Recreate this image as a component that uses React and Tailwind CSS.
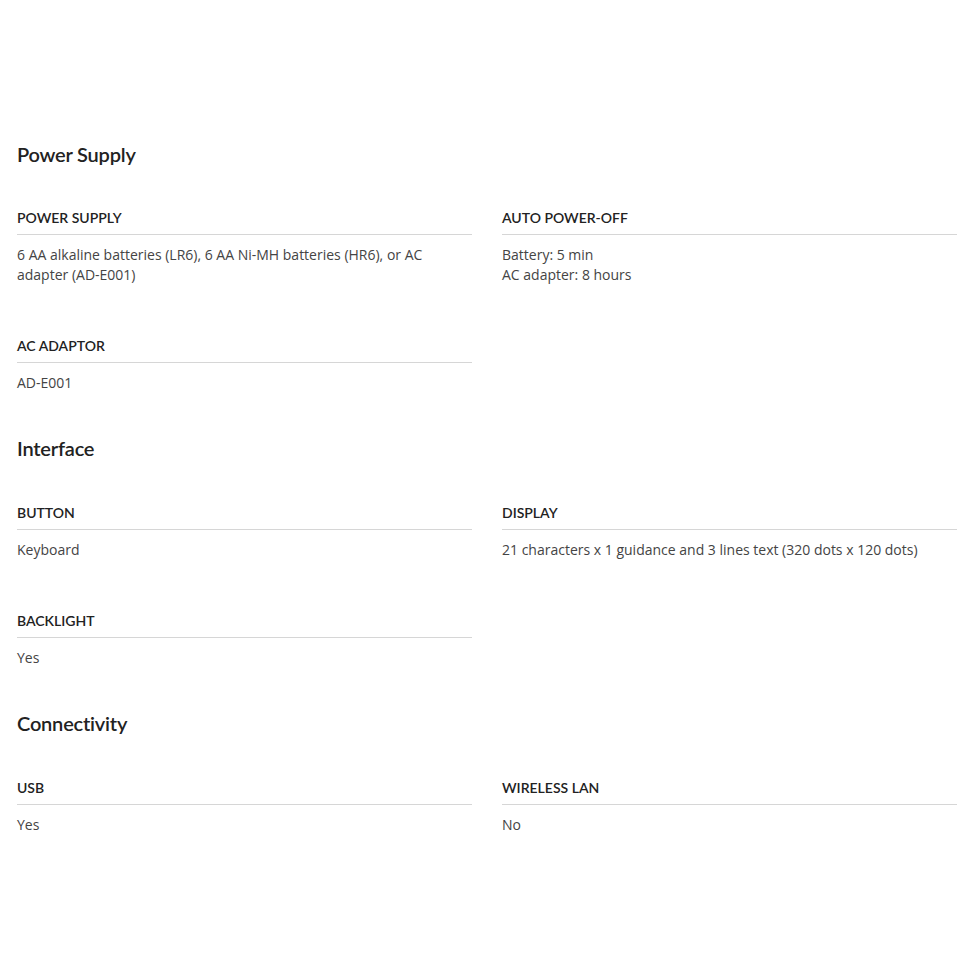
import React from 'react';

const SECTIONS = [
  {
    title: 'Power Supply',
    items: [
      { label: 'POWER SUPPLY', value: ['6 AA alkaline batteries (LR6), 6 AA Ni-MH batteries (HR6), or AC adapter (AD-E001)'] },
      { label: 'AUTO POWER-OFF', value: ['Battery: 5 min', 'AC adapter: 8 hours'] },
      { label: 'AC ADAPTOR', value: ['AD-E001'] },
    ],
  },
  {
    title: 'Interface',
    items: [
      { label: 'BUTTON', value: ['Keyboard'] },
      { label: 'DISPLAY', value: ['21 characters x 1 guidance and 3 lines text (320 dots x 120 dots)'] },
      { label: 'BACKLIGHT', value: ['Yes'] },
    ],
  },
  {
    title: 'Connectivity',
    items: [
      { label: 'USB', value: ['Yes'] },
      { label: 'WIRELESS LAN', value: ['No'] },
    ],
  },
];

const head = { fontFamily: 'Lato, "Open Sans", sans-serif' };
const body = { fontFamily: '"Open Sans", Arial, sans-serif' };

function Spec({ label, value }) {
  return (
    <div>
      <div className="text-[14px] leading-[20px] font-semibold text-[#222] pt-px pb-[6px] border-b border-[#d6d6d6]" style={head}>
        {label}
      </div>
      <div className="mt-[10px] text-[14px] leading-[20px] text-[#444]" style={body}>
        {value.map(v => <p key={v}>{v}</p>)}
      </div>
    </div>
  );
}

export default function App() {
  return (
    <div className="bg-white min-h-screen pl-[17px] pr-[10px] pt-[142px] pb-[100px]">
      {SECTIONS.map((s, i) => (
        <section key={s.title} className={i > 0 ? 'mt-[43px]' : ''}>
          <h2 className="text-[20px] leading-[24px] font-semibold text-[#222] tracking-[-0.2px]" style={head}>{s.title}</h2>
          <div className={`${i > 0 ? 'mt-[42px]' : 'mt-[41px]'} grid grid-cols-2 gap-x-[30px] gap-y-[50px]`}>
            {s.items.map(it => <Spec key={it.label} {...it} />)}
          </div>
        </section>
      ))}
    </div>
  );
}
